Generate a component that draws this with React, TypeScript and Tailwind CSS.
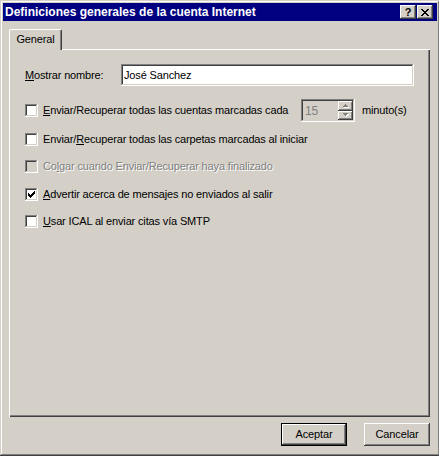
import { ReactNode } from "react";

const raised =
  "shadow-[inset_-1px_-1px_#404040,inset_1px_1px_#ffffff,inset_-2px_-2px_#808080,inset_2px_2px_#d4d0c8]";
const sunken =
  "shadow-[inset_-1px_-1px_#ffffff,inset_1px_1px_#808080,inset_-2px_-2px_#d4d0c8,inset_2px_2px_#404040]";

// access key letter
const U = ({ children }: { children: ReactNode }) => <span className="underline underline-offset-[1px]">{children}</span>;

const Check = ({ checked, disabled }: { checked?: boolean; disabled?: boolean }) => (
  <div
    className={`flex h-[13px] w-[13px] shrink-0 items-center justify-center ${sunken} ${
      disabled ? "bg-[#d4d0c8]" : "bg-white"
    }`}
  >
    {checked && (
      <svg width="7" height="7" viewBox="0 0 7 7" shapeRendering="crispEdges">
        <path
          fill="#000"
          d="M6 0h1v1h-1z M5 1h2v1h-2z M0 2h1v1h-1z M4 2h3v1h-3z M0 3h2v1h-2z M3 3h3v1h-3z M0 4h5v1h-5z M1 5h3v1h-3z M2 6h1v1h-1z"
        />
      </svg>
    )}
  </div>
);

const CheckRow = ({
  children,
  checked,
  disabled,
  className = "",
}: {
  children: ReactNode;
  checked?: boolean;
  disabled?: boolean;
  className?: string;
}) => (
  <div className={`flex h-[22px] items-center ${className}`}>
    <Check checked={checked} disabled={disabled} />
    <span
      className={`ml-[5px] whitespace-nowrap ${
        disabled ? "text-[#808080] [text-shadow:1px_1px_0_#ffffff]" : "text-black"
      }`}
    >
      {children}
    </span>
  </div>
);

const Arrow = ({ up }: { up?: boolean }) => (
  <svg width="6" height="4" viewBox="0 0 6 4" shapeRendering="crispEdges">
    <path fill="#ffffff" d={up ? "M3 1h1v1h-1z M2 2h3v1h-3z M1 3h5v1h-5z" : "M1 1h5v1h-5z M2 2h3v1h-3z M3 3h1v1h-1z"} />
    <path fill="#808080" d={up ? "M2 0h1v1h-1z M1 1h3v1h-3z M0 2h5v1h-5z" : "M0 0h5v1h-5z M1 1h3v1h-3z M2 2h1v1h-1z"} />
  </svg>
);

const Button = ({ children, isDefault }: { children: ReactNode; isDefault?: boolean }) => (
  <div className={`h-[23px] w-[66px] ${isDefault ? "border border-black" : ""}`}>
    <div className={`flex h-full w-full items-center justify-center bg-[#d4d0c8] ${raised}`}>{children}</div>
  </div>
);

export default function App() {
  return (
    <div className="h-[456px] w-[439px] overflow-hidden bg-[#d4d0c8] font-['Liberation_Sans',Arial,sans-serif] text-[11px] leading-none tracking-[-0.15px] text-black">
      <div
        className={`flex h-[456px] w-[440px] flex-col bg-[#d4d0c8] p-[3px] shadow-[inset_-1px_-1px_#404040,inset_1px_1px_#d4d0c8,inset_-2px_-2px_#808080,inset_2px_2px_#ffffff]`}
      >
        {/* title bar */}
        <div className="flex h-[18px] items-center bg-[#000080] pl-[2px] pr-[4px]">
          <span className="flex-1 text-[12px] font-bold tracking-normal text-white">
            Definiciones generales de la cuenta Internet
          </span>
          <div className="flex gap-px">
            <div className={`flex h-[14px] w-[16px] items-center justify-center bg-[#d4d0c8] ${raised}`}>
              <span className="text-[11px] font-bold leading-none">?</span>
            </div>
            <div className={`flex h-[14px] w-[16px] items-center justify-center bg-[#d4d0c8] ${raised}`}>
              <svg width="8" height="7" viewBox="0 0 8 7" shapeRendering="crispEdges">
                <path
                  fill="#000"
                  d="M0 0h2v1h-2z M6 0h2v1h-2z M1 1h2v1h-2z M5 1h2v1h-2z M2 2h4v1h-4z M3 3h2v1h-2z M2 4h4v1h-4z M1 5h2v1h-2z M5 5h2v1h-2z M0 6h2v1h-2z M6 6h2v1h-2z"
                />
              </svg>
            </div>
          </div>
        </div>

        <div className="ml-[6px] mt-[8px] flex w-[421px] flex-col">
          {/* tab */}
          <div className="flex">
            <div className="relative z-10 -mb-px flex h-[21px] w-[53px] items-center justify-center rounded-tl-[2px] rounded-tr-[2px] border-l border-t border-r border-l-white border-t-white border-r-[#404040] bg-[#d4d0c8] pb-[2px] shadow-[inset_-1px_0_#808080]">
              General
            </div>
          </div>

          {/* panel */}
          <div className="flex h-[368px] flex-col bg-[#d4d0c8] pl-[16px] pt-[15px] shadow-[inset_1px_1px_#ffffff,inset_-1px_-1px_#404040,inset_-2px_-2px_#808080]">
            <div className="flex h-[22px] items-center">
              <span className="w-[96px]">
                <U>M</U>ostrar nombre:
              </span>
              <div className={`flex h-[22px] w-[293px] items-center bg-white pl-[3px] ${sunken}`}>José Sanchez</div>
            </div>

            <div className="mt-[13px] flex h-[23px] items-center">
              <div className="w-[276px]">
                <CheckRow>
                  <U>E</U>nviar/Recuperar todas las cuentas marcadas cada
                </CheckRow>
              </div>
              <div className={`flex h-[23px] w-[54px] bg-[#d4d0c8] p-[2px] ${sunken}`}>
                <span className="flex flex-1 items-center pl-[2px] text-[12px] text-[#808080]">15</span>
                <div className="flex w-[15px] flex-col">
                  <div className={`flex flex-1 items-center justify-center ${raised}`}>
                    <Arrow up />
                  </div>
                  <div className={`flex flex-1 items-center justify-center ${raised}`}>
                    <Arrow />
                  </div>
                </div>
              </div>
              <span className="ml-[7px]">minuto(s)</span>
            </div>

            <CheckRow className="mt-[6px]">
              Enviar/<U>R</U>ecuperar todas las carpetas marcadas al iniciar
            </CheckRow>
            <CheckRow className="mt-[5px]" disabled>
              Co<U>l</U>gar cuando Enviar/Recuperar haya finalizado
            </CheckRow>
            <CheckRow className="mt-[6px]" checked>
              <U>A</U>dvertir acerca de mensajes no enviados al salir
            </CheckRow>
            <CheckRow className="mt-[5px]">
              <U>U</U>sar ICAL al enviar citas vía SMTP
            </CheckRow>
          </div>

          {/* buttons */}
          <div className="mt-[6px] flex justify-end gap-[17px]">
            <Button isDefault>Aceptar</Button>
            <Button>Cancelar</Button>
          </div>
        </div>
      </div>
    </div>
  );
}
